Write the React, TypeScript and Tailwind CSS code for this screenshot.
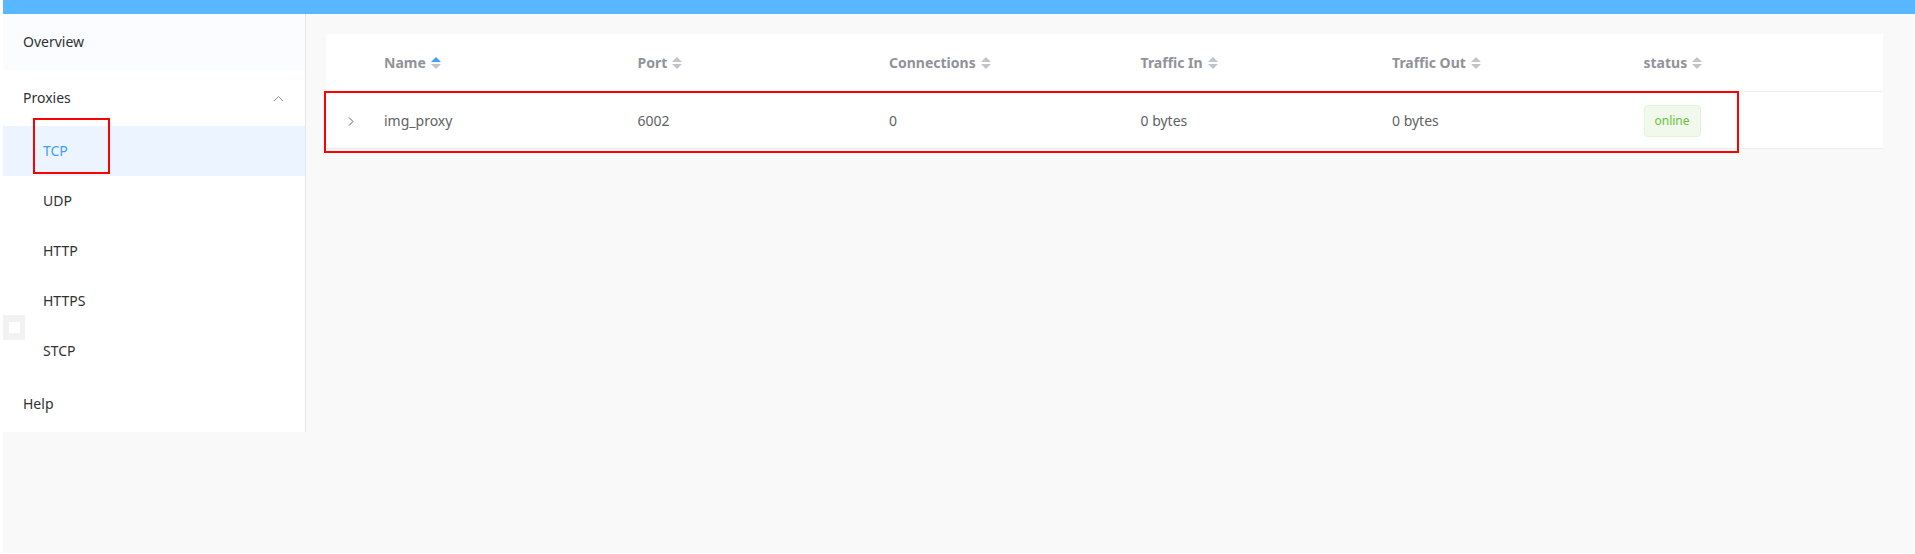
import React from "react";

const columns = ["Name", "Port", "Connections", "Traffic In", "Traffic Out", "status"];

function SortCaret({ active }: { active?: boolean }) {
  return (
    <span className="ml-[5px] inline-flex flex-col items-center gap-[2px]">
      <span
        className={
          "h-0 w-0 border-x-[5px] border-b-[5px] border-x-transparent " +
          (active ? "border-b-[#409eff]" : "border-b-[#c0c4cc]")
        }
      />
      <span className="h-0 w-0 border-x-[5px] border-t-[5px] border-x-transparent border-t-[#c0c4cc]" />
    </span>
  );
}

function MenuItem({ label, sub, active }: { label: string; sub?: boolean; active?: boolean }) {
  return (
    <div
      className={
        "flex items-center text-sm " +
        (sub ? "h-[50px] pl-10 " : "h-14 pl-5 ") +
        (active ? "bg-[#ecf5ff] text-[#409eff]" : "text-[#303133]")
      }
    >
      {label}
    </div>
  );
}

export default function App() {
  return (
    <div className="relative ml-[3px] flex h-[553px] flex-col bg-[#f9f9f9] font-['Noto_Sans',sans-serif]">
      <div className="h-[14px] bg-[#58b7ff]" />
      <div className="flex flex-1 items-start">
        <aside className="w-[303px] border-r border-[#e6e6e6] bg-white">
          <div className="flex h-14 items-center bg-[#fafcff] pl-5 text-sm text-[#303133]">Overview</div>
          <div className="flex h-14 items-center justify-between pl-5 pr-[21px] text-sm text-[#303133]">
            Proxies
            <svg width="11" height="7" viewBox="0 0 11 7" fill="none" stroke="#909399" strokeWidth="1">
              <path d="M1 6L5.5 1.5L10 6" />
            </svg>
          </div>
          <MenuItem label="TCP" sub active />
          <MenuItem label="UDP" sub />
          <MenuItem label="HTTP" sub />
          <MenuItem label="HTTPS" sub />
          <MenuItem label="STCP" sub />
          <MenuItem label="Help" />
        </aside>

        <main className="flex-1 pl-5 pr-8 pt-5">
          <div className="bg-white text-sm">
            <div className="grid h-[58px] grid-cols-[48px_repeat(6,1fr)] items-center border-b border-[#ebeef5] pt-px font-bold text-[#909399]">
              <div />
              {columns.map((c, i) => (
                <div key={c} className={"flex items-center " + (i === 0 ? "pl-[10px]" : "pl-[12px]")}>
                  {c}
                  <SortCaret active={i === 0} />
                </div>
              ))}
            </div>
            <div className="grid h-[57px] grid-cols-[48px_repeat(6,1fr)] items-center border-b border-[#ebeef5] pt-[2px] text-[#606266]">
              <div className="flex justify-center pl-[2px]">
                <svg width="6" height="9" viewBox="0 0 6 9" fill="none" stroke="#606266" strokeWidth="1">
                  <path d="M1 0.5L5 4.5L1 8.5" />
                </svg>
              </div>
              <div className="pl-[10px]">img_proxy</div>
              <div className="pl-[12px]">6002</div>
              <div className="pl-[12px]">0</div>
              <div className="pl-[12px]">0 bytes</div>
              <div className="pl-[12px]">0 bytes</div>
              <div className="pl-[12px]">
                <span className="inline-flex h-8 items-center rounded border border-[#e1f3d8] bg-[#f0f9eb] px-[10px] text-xs text-[#67c23a]">
                  online
                </span>
              </div>
            </div>
          </div>
        </main>
      </div>

      {/* collapse toggle */}
      <div className="absolute left-0 top-[315px] flex h-[25px] w-[22px] items-center justify-center bg-[#f2f2f2]">
        <div className="h-[11px] w-[11px] bg-white" />
      </div>

      {/* red annotation boxes */}
      <div className="pointer-events-none absolute left-[30px] top-[118px] h-[56px] w-[77px] border-2 border-[#ff0000]" />
      <div className="pointer-events-none absolute left-[321px] top-[91px] h-[62px] w-[1415px] border-2 border-[#ff0000]" />
    </div>
  );
}
